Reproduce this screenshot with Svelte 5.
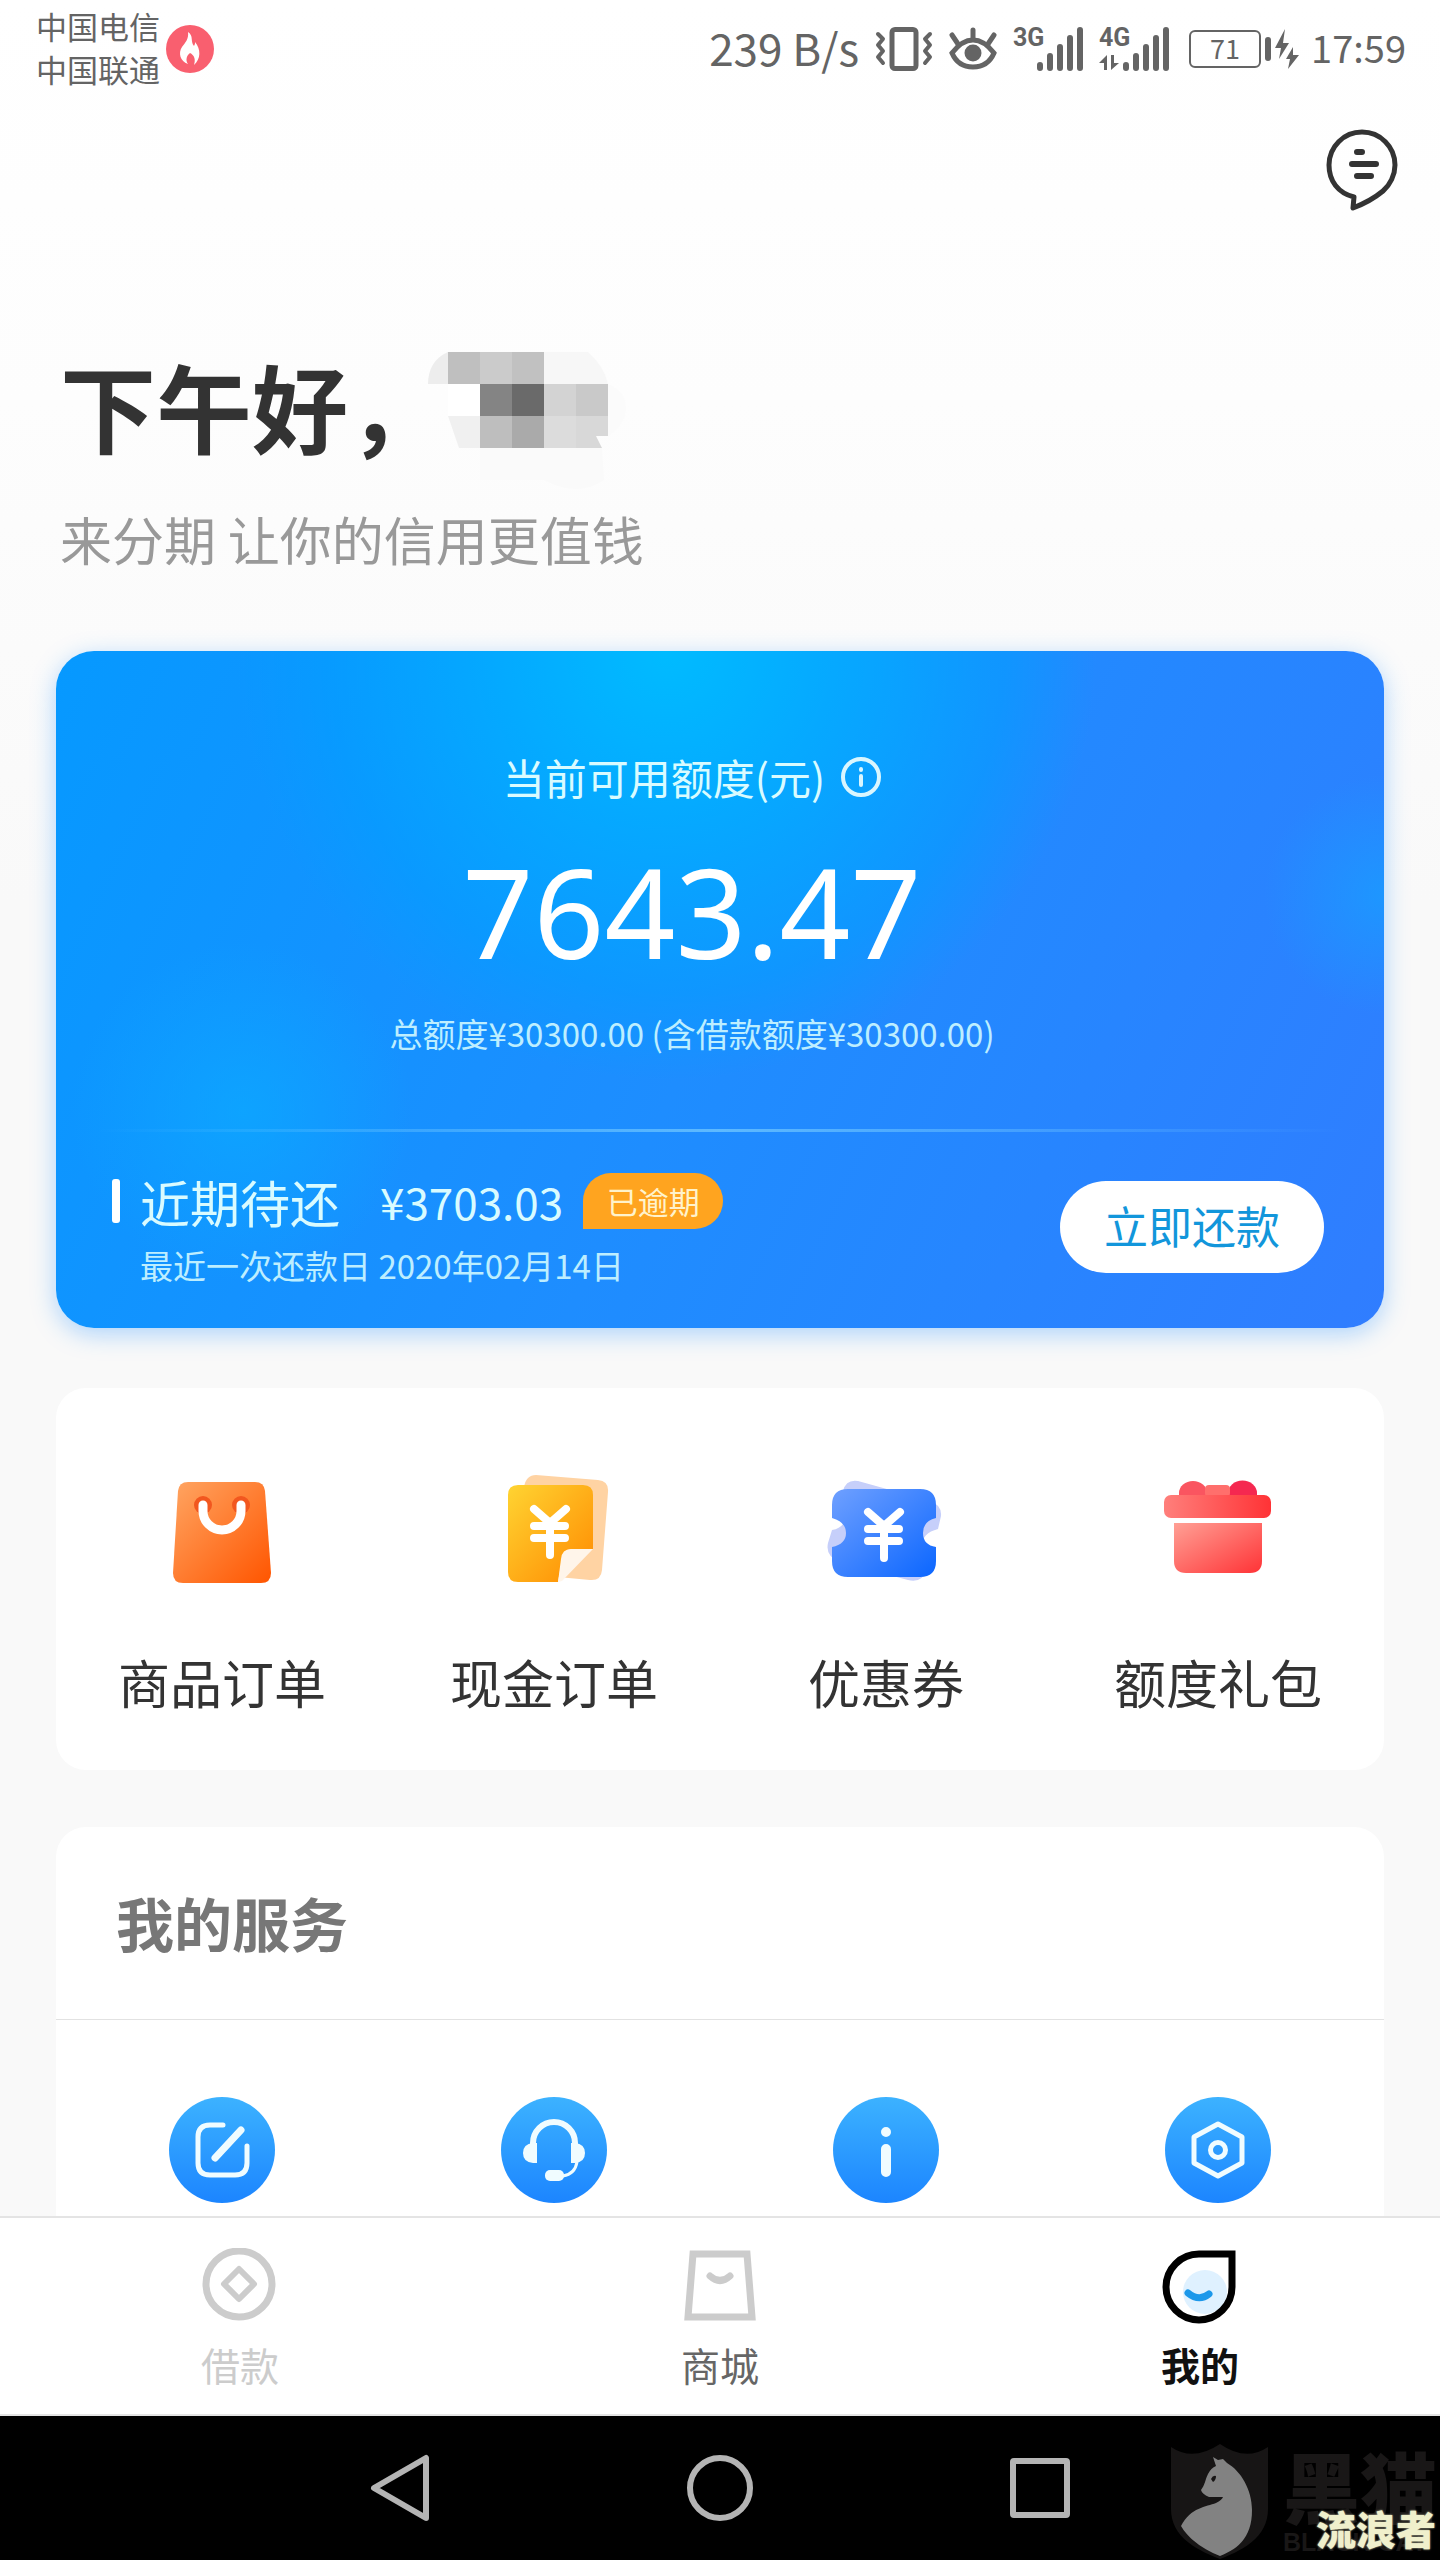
<script lang="ts">
	interface Item {
		icon: string;
		label: string;
	}

	let available: string = "7643.47";
	let total: string = "30300.00";
	let due: string = "3703.03";
	let activeTab: string = "mine";

	let orders: Item[] = [
		{ icon: "bag", label: "商品订单" },
		{ icon: "cash", label: "现金订单" },
		{ icon: "coupon", label: "优惠券" },
		{ icon: "gift", label: "额度礼包" }
	];

	let services: string[] = ["edit", "headset", "info", "setting"];

	let tabs: Item[] = [
		{ icon: "loan", label: "借款" },
		{ icon: "shop", label: "商城" },
		{ icon: "mine", label: "我的" }
	];

	function selectTab(icon: string): void {
		activeTab = icon;
	}
</script>

<div class="app">
	<header class="status-bar">
		<div class="carriers">
			<span>中国电信</span>
			<span>中国联通</span>
		</div>
		<svg class="flame" width="48" height="48" viewBox="0 0 48 48">
			<circle cx="24" cy="24" r="24" fill="#f95f6f" />
			<path d="M22 7C28 11 24 16 28 21C29 19 29 19 29 17C35 24 35 34 28 40C30 34 28 30 24 28C21 30 19 35 22 39C14 36 12 28 16 22C19 18 23 14 22 7Z" fill="#fff" />
		</svg>
		<div class="status-right">
			<span class="speed">239 B/s</span>
			<svg width="58" height="44" viewBox="0 0 58 44" fill="none" stroke="#646464">
				<rect x="17" y="2.5" width="24" height="39" rx="3" stroke-width="5" />
				<path d="M3 7L8 12L3 18L8 24L3 30L8 36M55 7L50 12L55 18L50 24L55 30L50 36" stroke-width="4" stroke-linecap="round" stroke-linejoin="round" />
			</svg>
			<svg width="48" height="44" viewBox="0 0 48 44" fill="none" stroke="#646464" stroke-linecap="round">
				<path d="M3 26Q13 13 24 13T45 26Q39 40 24 40T3 26Z" stroke-width="5" />
				<path d="M24 3V12M3 8L9 17M45 8L39 17" stroke-width="5" />
				<circle cx="24" cy="26" r="8.5" fill="#646464" stroke="none" />
			</svg>
			<svg width="70" height="44" viewBox="0 0 70 44">
				<text x="0" y="19" class="net">3G</text>
				<path d="M27 38V41M37 29V41M47 20V41M57 11V41M67 3V41" stroke="#646464" stroke-width="6" stroke-linecap="round" />
			</svg>
			<svg width="70" height="44" viewBox="0 0 70 44">
				<text x="0" y="19" class="net">4G</text>
				<path d="M8 43V28L0 36H5V43ZM12 28V43L20 36H15V28Z" fill="#646464" />
				<path d="M27 38V41M37 29V41M47 20V41M57 11V41M67 3V41" stroke="#646464" stroke-width="6" stroke-linecap="round" />
			</svg>
			<div class="power">
				<span class="battery">71</span>
				<span class="battery-tip"></span>
				<svg width="24" height="40" viewBox="0 0 24 40" fill="#646464">
					<path d="M10 0L0 19H6L4 30L14 14H8ZM18 18L11 30H15L13 40L24 26H18Z" />
				</svg>
			</div>
			<time class="clock">17:59</time>
		</div>
	</header>

	<main>
		<div class="toolbar">
			<button class="message" aria-label="消息">
				<svg width="72" height="82" viewBox="0 0 72 82" fill="none" stroke="#333" stroke-width="5" stroke-linecap="round" stroke-linejoin="round">
					<path d="M28 68C12 64 3 52 3 36A33 33 0 0 1 69 36C69 46 64 56 57 62Q45 72 27 79Z" />
					<path d="M31 23H36M26 35H50M31 47H45" stroke-width="6" />
				</svg>
			</button>
		</div>

		<div class="greeting">
			<h1>下午好，</h1>
			<svg class="mosaic" width="198" height="144" viewBox="0 0 198 144">
				<path d="M20 0C6 6 0 18 0 32H20Z" fill="#ededed" />
				<rect x="20" width="32" height="32" fill="#bfbfbf" />
				<rect x="52" width="32" height="32" fill="#cbcbcb" />
				<rect x="84" width="32" height="32" fill="#c1c1c1" />
				<path d="M116 0H160Q176 14 180 32H116Z" fill="#f7f7f7" />
				<rect x="20" y="32" width="32" height="32" fill="#fff" />
				<rect x="52" y="32" width="32" height="32" fill="#848484" />
				<rect x="84" y="32" width="32" height="32" fill="#6a6a6a" />
				<rect x="116" y="32" width="32" height="32" fill="#d3d3d3" />
				<rect x="148" y="32" width="32" height="32" fill="#c9c9c9" />
				<path d="M180 32Q198 40 198 56T180 84Z" fill="#fbfbfb" />
				<path d="M20 64H52V96H31Z" fill="#f0f0f0" />
				<rect x="52" y="64" width="32" height="32" fill="#bebebe" />
				<rect x="84" y="64" width="32" height="32" fill="#aaa" />
				<rect x="116" y="64" width="32" height="32" fill="#dcdcdc" />
				<path d="M148 64H180V84H168L174 96H148Z" fill="#d8d8d8" />
				<path d="M52 96H174L176 128Q150 146 116 128H52Z" fill="#fafafa" />
			</svg>
		</div>
		<p class="slogan">来分期 让你的信用更值钱</p>

		<section class="quota">
			<div class="quota-top">
				<div class="quota-title">
					<span>当前可用额度(元)</span>
					<svg width="40" height="40" viewBox="0 0 40 40" fill="none" stroke="#d9f6ff" stroke-linecap="round">
						<circle cx="20" cy="20" r="18" stroke-width="4" />
						<path d="M20 12V13M20 19V28" stroke-width="4" />
					</svg>
				</div>
				<strong class="amount">{available}</strong>
				<p class="total">总额度¥{total} (含借款额度¥{total})</p>
			</div>
			<div class="line"></div>
			<div class="quota-bottom">
				<div>
					<div class="due">
						<i class="mark"></i>
						<span class="due-title">近期待还</span>
						<span class="due-amount">¥{due}</span>
						<span class="badge">已逾期</span>
					</div>
					<p class="due-date">最近一次还款日 2020年02月14日</p>
				</div>
				<button class="pay">立即还款</button>
			</div>
		</section>

		<nav class="orders">
			{#each orders as item}
				<a class="order" href="#{item.icon}">
					<svg width="120" height="120" viewBox="0 0 120 120" fill="none">
						{#if item.icon === "bag"}
							<defs>
								<linearGradient id="bag" x1="0" y1="0" x2="1" y2="1">
									<stop offset="0" stop-color="#ffa562" />
									<stop offset="1" stop-color="#ff5500" />
								</linearGradient>
							</defs>
							<path d="M26 10H93Q102 10 103 19L109 101Q109 111 99 111H21Q11 111 11 101L16 19Q17 10 26 10Z" fill="url(#bag)" />
							<circle cx="41" cy="33" r="9" fill="#f2571f" />
							<circle cx="79" cy="33" r="9" fill="#f2571f" />
							<path d="M41 33V39A19 19 0 0 0 79 39V33" stroke="#fff" stroke-width="9" stroke-linecap="round" />
						{:else if item.icon === "cash"}
							<defs>
								<linearGradient id="cash" x1="0" y1="0" x2="1" y2="1">
									<stop offset="0" stop-color="#ffd432" />
									<stop offset="1" stop-color="#ff8a00" />
								</linearGradient>
							</defs>
							<g transform="translate(2 1)">
								<path d="M40 2L102 7Q113 8 112 19L106 97Q105 108 94 107L62 104L28 14Q30 2 40 2Z" fill="#ffd3a3" />
								<path d="M22 12H87Q97 12 97 22V76H75Q66 77 66 86L62 109H22Q12 109 12 99V22Q12 12 22 12Z" fill="url(#cash)" />
								<path d="M62 109L65 86Q66 76 75 76H97L66 108Z" fill="#fff5ea" />
								<path d="M38 36L54 50L70 36M38 53H69M38 65H69M54 50V82" stroke="#fff" stroke-width="8" stroke-linecap="round" stroke-linejoin="round" />
							</g>
						{:else if item.icon === "coupon"}
							<defs>
								<linearGradient id="coupon" x1="0" y1="0" x2="1" y2="1">
									<stop offset="0" stop-color="#6fa0ff" />
									<stop offset="1" stop-color="#0b66ff" />
								</linearGradient>
							</defs>
							<path d="M17 19Q20 7 32 9L104 29Q116 33 115 44L112 57Q96 61 96 74L102 96Q96 112 82 108L14 90Q-1 84 2 71L6 58Q18 56 19 46Z" fill="#c6cffa" />
							<path d="M22 17H94Q110 17 110 33V46Q97 49 97 61T110 75V89Q110 105 94 105H22Q6 105 6 89V75Q20 72 20 61T6 46V33Q6 17 22 17Z" fill="url(#coupon)" />
							<path d="M42 40L58 54L74 40M42 57H73M42 69H73M58 54V86" stroke="#fff" stroke-width="8" stroke-linecap="round" stroke-linejoin="round" />
						{:else}
							<defs>
								<linearGradient id="gift" x1="0" y1="0" x2="1" y2="1">
									<stop offset="0" stop-color="#ffa095" />
									<stop offset="1" stop-color="#ff3336" />
								</linearGradient>
								<linearGradient id="lid">
									<stop offset="0" stop-color="#ff7f7b" />
									<stop offset="1" stop-color="#ff3336" />
								</linearGradient>
							</defs>
							<path d="M21 24V21A14 12 0 0 1 49 21V24Z" fill="#fa5560" />
							<path d="M70 24V21A14 12 0 0 1 99 21V24Z" fill="#f52850" />
							<rect x="47" y="13" width="25" height="12" rx="4" fill="#ff6f6c" />
							<rect x="6" y="23" width="107" height="23" rx="7" fill="url(#lid)" />
							<path d="M16 51H104V89Q104 101 92 101H28Q16 101 16 89Z" fill="url(#gift)" />
						{/if}
					</svg>
					<span>{item.label}</span>
				</a>
			{/each}
		</nav>

		<section class="services">
			<h2>我的服务</h2>
			<div class="service-list">
				{#each services as service}
					<a class="service" href="#{service}" aria-label={service}>
						<svg width="62" height="62" viewBox="22 22 62 62" fill="none" stroke="#f0fcff" stroke-width="5" stroke-linecap="round" stroke-linejoin="round">
							{#if service === "edit"}
								<path d="M54 28H41Q29 28 29 40V66Q29 78 41 78H66Q78 78 78 66V49" />
								<path d="M72 33L46 61" stroke-width="7" />
							{:else if service === "headset"}
								<path d="M32 48V46A21 21 0 0 1 74 46V48" stroke-width="6" />
								<path d="M36 46V66H32Q22 65 22 56T32 46ZM70 46V66H74Q84 65 84 56T74 46Z" fill="#f0fcff" stroke="none" />
								<path d="M76 65Q74 77 62 79" stroke-width="3" />
								<rect x="44" y="73" width="19" height="11" rx="5" fill="#f0fcff" stroke="none" />
							{:else if service === "info"}
								<path d="M53 35V35M53 52V75" stroke-width="10" />
							{:else}
								<path d="M53 27L77 40V66L53 79L29 66V40Z" />
								<circle cx="53" cy="53" r="7.500" />
							{/if}
						</svg>
					</a>
				{/each}
			</div>
		</section>
	</main>

	<nav class="tabs">
		{#each tabs as tab}
			<button class="tab {tab.icon}" class:active={activeTab === tab.icon} on:click={() => selectTab(tab.icon)}>
				<svg width="76" height="76" viewBox="0 0 76 76" fill="none" stroke-width="7">
					{#if tab.icon === "loan"}
						<circle cx="37" cy="36" r="33" stroke="#ccc" />
						<path d="M37 21L52 36L37 51L22 36Z" stroke="#ccc" stroke-width="6" stroke-linejoin="round" />
					{:else if tab.icon === "shop"}
						<path d="M11 6H65L70 69H6Z" stroke="#ccc" />
						<path d="M28 28Q38 37 48 28" stroke="#ccc" stroke-linecap="round" />
					{:else}
						<circle cx="43" cy="44" r="22" fill="#dff1ff" />
						<path d="M37 6H70V39A33 33 0 1 1 37 6Z" stroke="#000" />
						<path d="M26 45Q37 54 47 46" stroke="#1c98ea" stroke-linecap="round" />
					{/if}
				</svg>
				<span>{tab.label}</span>
			</button>
		{/each}
	</nav>

	<footer class="system">
		<div class="system-keys">
			<button aria-label="返回">
				<svg width="68" height="68" viewBox="0 0 68 68">
					<path d="M60 4V64L8 34Z" />
				</svg>
			</button>
			<button aria-label="主页">
				<svg width="68" height="68" viewBox="0 0 68 68">
					<circle cx="34" cy="34" r="30" />
				</svg>
			</button>
			<button aria-label="最近任务">
				<svg width="68" height="68" viewBox="0 0 68 68">
					<rect x="7" y="7" width="54" height="54" rx="1" />
				</svg>
			</button>
		</div>
		<div class="watermark">
			<svg width="98" height="116" viewBox="0 0 98 116">
				<path d="M0 3Q22 18 49 0Q75 18 97 3V65C97 90 78 104 49 115C20 104 0 90 0 65Z" fill="#171515" />
				<path d="M42 13L47 16L52 15L56 19C70 27 81 46 81 66C81 92 69 104 49 112C34 106 18 96 10 82C20 63 35 63 45 59Q51 56 52 53H38Q31 50 30 46C34 41 34 36 37 30Q40 24 45 22Z" fill="#828282" />
				<path d="M40 35Q42 31 45 32Q45 36 42 38Z" fill="#171515" />
			</svg>
			<div class="brand">
				<b>黑猫</b>
				<small>BLACK CAT</small>
			</div>
			<span class="author">流浪者</span>
		</div>
	</footer>
</div>

<style>
	:global(body) {
		margin: 0;
		background: #000;
	}

	.app {
		display: flex;
		flex-direction: column;
		min-height: 100vh;
		background: linear-gradient(#fff 0, #fdfdfd 400px, #f9f9f9 900px);
		color: #333;
		font-family: "Noto Sans CJK SC", "Noto Sans", sans-serif;
	}

	h1, h2, p {
		margin: 0;
	}

	svg {
		display: block;
		flex: none;
	}

	button {
		padding: 0;
		border: none;
		background: none;
		color: inherit;
		font-family: inherit;
		cursor: pointer;
	}

	a {
		color: inherit;
		text-decoration: none;
	}

	.status-bar {
		display: flex;
		align-items: center;
		height: 98px;
		padding: 0 34px 0 36px;
		color: #646464;
	}

	.carriers {
		display: flex;
		flex-direction: column;
		padding-bottom: 4px;
		font-size: 31px;
		line-height: 43px;
	}

	.flame {
		margin-left: 6px;
	}

	.status-right {
		display: flex;
		align-items: center;
		gap: 16px;
		margin-left: auto;
	}

	.speed {
		padding-bottom: 4px;
		font-size: 44px;
		line-height: 60px;
	}

	.clock {
		padding-bottom: 4px;
		font-size: 38px;
		line-height: 60px;
	}

	.net {
		fill: #646464;
		font-family: Roboto, sans-serif;
		font-size: 25px;
		font-weight: 700;
	}

	.power {
		display: flex;
		align-items: center;
		gap: 4px;
		margin: 0 -4px 0 4px;
	}

	.battery {
		box-sizing: border-box;
		width: 72px;
		height: 38px;
		border: 2px solid #646464;
		border-radius: 6px;
		font-size: 27px;
		line-height: 32px;
		text-align: center;
	}

	.battery-tip {
		width: 6px;
		height: 24px;
		border-radius: 3px;
		background: #646464;
	}

	main {
		flex: 1;
		padding: 0 56px;
	}

	.toolbar {
		display: flex;
		justify-content: flex-end;
		margin-right: -14px;
		padding-top: 31px;
	}

	.greeting {
		display: flex;
		height: 128px;
		margin-top: 141px;
		padding-left: 4px;
	}

	h1 {
		font-size: 96px;
		line-height: 106px;
	}

	.mosaic {
		margin-left: -16px;
	}

	.slogan {
		margin-top: 29px;
		padding-left: 4px;
		color: #999;
		font-size: 52px;
		line-height: 60px;
	}

	.quota {
		margin-top: 82px;
		border-radius: 38px;
		background:
			radial-gradient(circle at 46% 0, #00bbff 0, rgba(0, 175, 255, 0.8) 170px, rgba(0, 160, 255, 0.5) 340px, rgba(0, 160, 255, 0) 430px),
			radial-gradient(circle at 100% 36%, rgba(20, 165, 255, 0.6) 0, rgba(20, 160, 255, 0) 120px),
			radial-gradient(circle at 14% 68%, rgba(12, 170, 255, 0.7) 0, rgba(12, 160, 255, 0) 170px),
			linear-gradient(115deg, #0699ff 0, #1e8dff 50%, #307dff 100%);
		box-shadow: 0 6px 24px rgba(30, 140, 255, 0.35);
		color: #d9fbff;
	}

	.quota-top {
		display: flex;
		flex-direction: column;
		align-items: center;
		padding: 96px 56px 76px 0;
	}

	.quota-title {
		display: flex;
		align-items: center;
		gap: 16px;
		font-size: 42px;
		line-height: 60px;
	}

	.amount {
		margin-top: 34px;
		color: #fff;
		font-family: "Noto Sans", sans-serif;
		font-size: 124px;
		font-weight: 400;
		line-height: 140px;
	}

	.total {
		margin-top: 32px;
		color: #bdeeff;
		font-size: 33px;
		line-height: 40px;
	}

	.line {
		height: 3px;
		margin: 0 40px;
		background: linear-gradient(90deg, rgba(120, 205, 255, 0), rgba(120, 205, 255, 0.7) 50%, rgba(120, 205, 255, 0));
	}

	.quota-bottom {
		display: flex;
		align-items: center;
		justify-content: space-between;
		padding: 41px 60px 47px 56px;
	}

	.due {
		display: flex;
		align-items: center;
		height: 56px;
	}

	.mark {
		width: 8px;
		height: 44px;
		margin-right: 20px;
		border-radius: 3px;
		background: #fff;
	}

	.due-title {
		font-size: 50px;
		line-height: 52px;
	}

	.due-amount {
		margin: 0 20px 0 40px;
		font-size: 44px;
		line-height: 52px;
	}

	.badge {
		width: 140px;
		border-radius: 28px 28px 28px 0;
		background: #ffa41f;
		color: #fff3cc;
		font-size: 31px;
		line-height: 56px;
		text-align: center;
	}

	.due-date {
		margin-top: 20px;
		padding-left: 28px;
		color: #bdeeff;
		font-size: 33px;
		line-height: 32px;
	}

	.pay {
		width: 264px;
		height: 92px;
		padding-bottom: 4px;
		border-radius: 46px;
		background: #fff;
		color: #1296db;
		font-size: 44px;
	}

	.orders {
		display: grid;
		grid-template-columns: repeat(4, 1fr);
		margin-top: 60px;
		padding: 84px 0 58px;
		border-radius: 30px;
		background: #fff;
	}

	.order {
		display: flex;
		flex-direction: column;
		align-items: center;
		gap: 60px;
		font-size: 52px;
		line-height: 60px;
	}

	.services {
		margin-top: 57px;
		border-radius: 30px 30px 0 0;
		background: #fff;
	}

	h2 {
		padding: 0 60px 2px;
		border-bottom: 1px solid #e2e2e2;
		color: #777;
		font-size: 58px;
		line-height: 190px;
	}

	.service-list {
		display: grid;
		grid-template-columns: repeat(4, 1fr);
		justify-items: center;
		padding: 77px 0 13px;
	}

	.service {
		display: flex;
		align-items: center;
		justify-content: center;
		width: 106px;
		height: 106px;
		border-radius: 50%;
		background: linear-gradient(#3cb2ff, #1c85ff);
	}

	.tabs {
		display: grid;
		grid-template-columns: repeat(3, 1fr);
		padding: 30px 0 28px;
		border-top: 2px solid #e4e4e4;
		border-bottom: 2px solid #e4e4e4;
		background: #fff;
	}

	.tab {
		display: flex;
		flex-direction: column;
		align-items: center;
		gap: 18px;
		color: #666;
		font-size: 39px;
		line-height: 44px;
	}

	.tab.loan {
		color: #ccc;
	}

	.tab.active {
		color: #111;
		font-weight: 700;
	}

	.system {
		position: relative;
		overflow: hidden;
		background: #000;
	}

	.system-keys {
		display: grid;
		grid-template-columns: repeat(3, 1fr);
		justify-items: center;
		width: 66.67%;
		margin: 0 auto;
		padding: 38px 0;
	}

	.system-keys svg {
		fill: none;
		stroke: #b4b4b4;
		stroke-width: 6px;
		stroke-linejoin: round;
	}

	.watermark {
		position: absolute;
		right: 2px;
		bottom: 0;
		display: flex;
		gap: 14px;
		color: #191717;
	}

	.brand {
		display: flex;
		flex-direction: column;
		width: 155px;
	}

	.brand b {
		font-size: 77px;
		font-weight: 900;
		line-height: 82px;
	}

	.brand small {
		font-family: "Liberation Sans", sans-serif;
		font-size: 25px;
		font-weight: 700;
		line-height: 32px;
	}

	.author {
		position: absolute;
		right: 2px;
		bottom: 10px;
		color: #f0f0cc;
		font-size: 40px;
		font-weight: 900;
		line-height: 44px;
		text-shadow: 0 0 2px #f0f0cc;
	}
</style>
